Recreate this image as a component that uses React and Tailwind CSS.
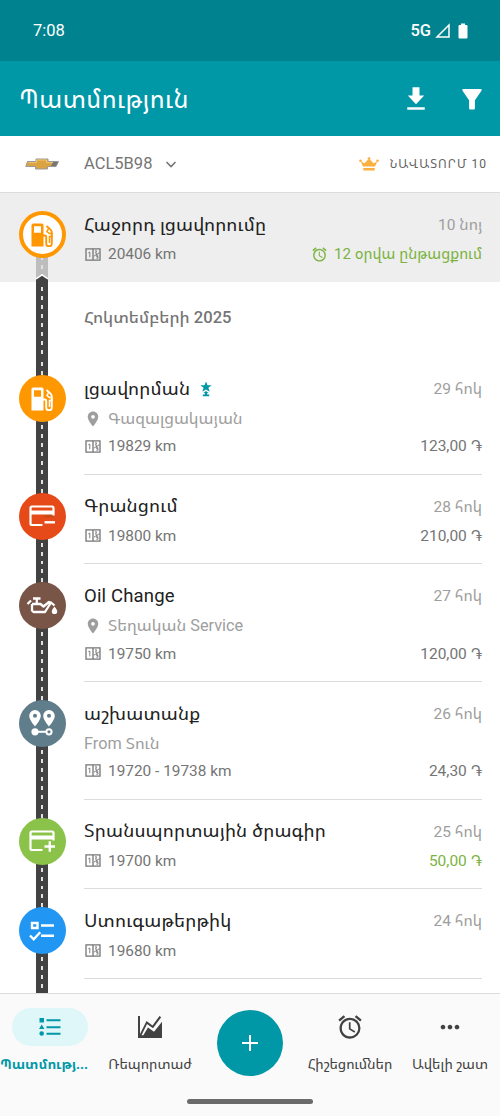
import React from 'react';
import { MdPlace, MdAlarm, MdMoreHoriz } from 'react-icons/md';

const FuelIcon = ({ className }) => (
  <svg viewBox="0 0 24 24" className={className} fill="none" stroke="currentColor">
    <path fillRule="evenodd" fill="currentColor" stroke="none" d="M3 .5h9A1.500 1.500 0 0 1 13.500 2v21.500h-12V2A1.500 1.500 0 0 1 3 .5zM4 3.300v6.500h7V3.300z" />
    <path d="M13 12.500h1.700a1.500 1.500 0 0 1 1.500 1.500v6.500a2.700 2.700 0 0 0 5.600 0V9.500c0-1.300-.4-2-1.300-2.900L16.500 3" strokeWidth="1.900" />
    <path d="M18.500 5.500L17 8.500l2.500 2h2.200v3h-2.200V20" strokeWidth="1.500" />
  </svg>
);

const CardIcon = ({ sign, className }) => (
  <svg viewBox="0 0 28 24" className={className} fill="none" stroke="currentColor" strokeWidth="2.200">
    <path d="M14.500 21H4a1.500 1.500 0 0 1-1.500-1.500V4A1.500 1.500 0 0 1 4 2.500h20A1.500 1.500 0 0 1 25.500 4v7.500" strokeWidth="2.200" />
    <path d="M2.500 8.500h23" strokeWidth="4" />
    {sign === 'plus' ? (
      <path d="M16.500 17.500h10.500M21.800 12.300v10.500" strokeWidth="2.400" />
    ) : (
      <>
        <path d="M15.500 13.200c2-3 9-3 10.500 0z" fill="#bf4a1a" stroke="none" />
        <path d="M16.500 18.300H27" strokeWidth="2.400" />
      </>
    )}
  </svg>
);

const OilIcon = ({ className }) => (
  <svg viewBox="0 0 32 24" className={className} fill="none" stroke="currentColor" strokeWidth="2.300" strokeLinejoin="round">
    <path d="M1.500 10l3.500-3.500M7 4.500h7.500M10.800 5v5M6 10h8.500l3 2.500L23 8l3 1M6 10v6.500L7.500 18H19l6-9.500 3.500 3" />
    <path fill="currentColor" stroke="none" d="M28.500 12.500c1.600 2.200 2.700 3.400 2.700 4.900a2.700 2.700 0 0 1-5.400 0c0-1.500 1.100-2.700 2.700-4.900z" />
  </svg>
);

const RouteIcon = ({ className }) => (
  <svg viewBox="0 0 28 28" className={className} fill="currentColor">
    <path fillRule="evenodd" d="M7 1a5.800 5.800 0 0 0-5.800 5.800C1.200 11 7 17.500 7 17.500S12.800 11 12.800 6.800A5.800 5.800 0 0 0 7 1zm0 3.800a2 2 0 1 1 0 4 2 2 0 0 1 0-4z" />
    <path fillRule="evenodd" d="M21 1a5.800 5.800 0 0 0-5.800 5.800C15.200 11 21 17.500 21 17.500S26.800 11 26.800 6.800A5.800 5.800 0 0 0 21 1zm0 3.800a2 2 0 1 1 0 4 2 2 0 0 1 0-4z" />
    <circle cx="7" cy="22.800" r="3.600" />
    <path d="M10 22.800h8" stroke="currentColor" strokeWidth="2" />
    <circle cx="21" cy="22.800" r="2.600" fill="none" stroke="currentColor" strokeWidth="2" />
  </svg>
);

const ChecklistIcon = ({ className }) => (
  <svg viewBox="0 0 28 24" className={className} fill="none" stroke="currentColor" strokeWidth="2.400">
    <path d="M4 4h5.500v5H4zM13 6.500h13M13 16.700h13M2 16.500l3.700 3.800 6.500-7" />
  </svg>
);

const OdometerIcon = ({ className }) => (
  <svg viewBox="0 0 16 13" className={className} fill="none" stroke="currentColor" strokeWidth="1.300">
    <path d="M1 .9h14v11.200H1zM8 .9v11.200" />
    <path d="M3.300 4.800l1.500-.8v5.300M10 2.800h1.600l-1.100 2.400h1.500M14.600 4.600L8.800 8.200M13.200 7.200h-1.600v1.300h1.400v1.700h-1.700" strokeWidth=".9" />
  </svg>
);

const StarPinIcon = () => (
  <svg viewBox="0 0 12 16" className="-mt-0.5 ml-2.5 h-4 w-3 text-[#0097a7]" fill="currentColor">
    <path d="M6 .6l1.500 3.700h4.200L8.400 6.800l1.200 3.900L6 8.500l-3.600 2.200 1.200-3.900L.3 4.300h4.200z" />
    <path d="M6 10l2.600 2H7.200v1.500h2V15.200H2.800v-1.700h2V12H3.400z" />
  </svg>
);

const entries = [
  { title: 'լցավորման', star: true, place: 'Գազալցակայան', km: '19829 km', date: '29 հոկ', price: '123,00 ֏', color: 'bg-[#ff9800]', icon: <FuelIcon className="size-6" /> },
  { title: 'Գրանցում', km: '19800 km', date: '28 հոկ', price: '210,00 ֏', color: 'bg-[#e64a19]', icon: <CardIcon className="h-6 w-7" /> },
  { title: 'Oil Change', place: 'Տեղական Service', km: '19750 km', date: '27 հոկ', price: '120,00 ֏', color: 'bg-[#795548]', icon: <OilIcon className="h-6 w-8" /> },
  { title: 'աշխատանք', note: 'From Տուն', km: '19720 - 19738 km', date: '26 հոկ', price: '24,30 ֏', color: 'bg-[#607d8b]', icon: <RouteIcon className="size-7" /> },
  { title: 'Տրանսպորտային ծրագիր', km: '19700 km', date: '25 հոկ', price: '50,00 ֏', green: true, color: 'bg-[#8bc34a]', icon: <CardIcon sign="plus" className="h-6 w-7" /> },
  { title: 'Ստուգաթերթիկ', km: '19680 km', date: '24 հոկ', color: 'bg-[#2196f3]', icon: <ChecklistIcon className="h-6 w-7" /> },
];

const Road = ({ color = 'bg-[#424242]' }) => (
  <div className={`col-start-1 row-start-1 flex w-3 justify-center ${color}`}>
    <div className="w-[1.5px] bg-[repeating-linear-gradient(to_bottom,transparent_0_5px,#e0e0e0_5px_9px)]"></div>
  </div>
);

const Entry = ({ item }) => (
  <li className={`flex ${item.place || item.note ? 'h-[117.8px]' : 'h-[89.4px]'}`}>
    <div className="grid w-[84px] shrink-0 justify-items-center">
      <Road />
      <div className={`col-start-1 row-start-1 mt-[18px] flex size-[47px] items-center justify-center rounded-full text-white ${item.color}`}>
        {item.icon}
      </div>
    </div>
    <div className="mr-[18px] flex flex-1 flex-col border-b border-[#dcdcdc] pt-[20.5px] text-[#757575]">
      <div className="flex h-6 items-center justify-between">
        <h2 className="flex items-center text-[18.5px] tracking-[0.17px] text-[#212121]">
          {item.title}
          {item.star && <StarPinIcon />}
        </h2>
        <span className="text-[15.5px] text-[#9e9e9e]">{item.date}</span>
      </div>
      {item.place && (
        <div className="mt-[5px] flex h-6 items-center text-[16.3px] text-[#9e9e9e]">
          <MdPlace className="mr-1.5 size-[18px]" />
          <span className="pt-px">{item.place}</span>
        </div>
      )}
      {item.note && <div className="mt-[5px] flex h-6 items-center pt-px text-[16.3px] text-[#9e9e9e]">{item.note}</div>}
      <div className={`flex h-6 items-center ${item.place || item.note ? 'mt-[3.5px]' : 'mt-[4.5px]'}`}>
        <OdometerIcon className="mr-1.5 ml-px h-[13px] w-4" />
        <span className="ml-px pt-0.5 text-[15.4px]">{item.km}</span>
        <span className={`ml-auto pt-0.5 text-[15.5px] ${item.green ? 'text-[#7cb342]' : ''}`}>{item.price}</span>
      </div>
    </div>
  </li>
);

const NavItem = ({ label, active, children }) => (
  <div className={`flex w-[100px] flex-col items-center ${active ? 'font-bold text-[#0097a7]' : 'text-[#424242]'}`}>
    <div className={`mt-3.5 flex h-[38px] w-[76px] items-center justify-center rounded-full ${active ? 'bg-[#e0f7fa]' : ''}`}>{children}</div>
    <span className={`mt-2 leading-5 whitespace-nowrap ${active ? 'mr-3 text-[13.8px]' : 'text-[14px]'}`}>{label}</span>
  </div>
);

const App = () => {
  return (
    <div className="flex h-[1116px] w-[500px] flex-col overflow-hidden bg-white font-['Roboto','Noto_Sans_Armenian','Noto_Sans','DejaVu_Sans',sans-serif] text-base">
      <div className="flex h-[61px] shrink-0 items-center bg-[#00838f] pr-8 pl-[33px] text-white">
        <span className="mt-px text-[16.5px]">7:08</span>
        <span className="mt-0.5 ml-auto text-[16.5px] font-medium">5G</span>
        <svg viewBox="0 0 16 16" className="ml-1 size-4" fill="none" stroke="currentColor" strokeWidth="1.500">
          <path d="M14 2v12H2z" />
        </svg>
        <svg viewBox="0 0 10 16" className="ml-[7px] h-4 w-2.5" fill="currentColor">
          <path d="M3 .5h4V2h1.500a1 1 0 0 1 1 1v11.500a1 1 0 0 1-1 1h-7a1 1 0 0 1-1-1V3a1 1 0 0 1 1-1H3z" />
        </svg>
      </div>

      <header className="flex h-[75px] shrink-0 items-center bg-[#0097a7] pr-[14px] pl-[19px] text-white">
        <h1 className="mt-0.5 text-[25px] tracking-[0.4px]">Պատմություն</h1>
        <svg viewBox="0 0 24 24" className="ml-auto size-7" fill="currentColor">
          <path d="M19 9h-4V2H9v7H5l7 7.500L19 9zM4.500 19v2.300h15V19z" />
        </svg>
        <svg viewBox="0 0 24 24" className="ml-7 size-7" fill="currentColor">
          <path d="M4.500 3.500h15c.8 0 1.100.8.6 1.400L14.500 13v7a1 1 0 0 1-1 1h-3a1 1 0 0 1-1-1v-7L3.900 4.900c-.5-.6-.2-1.400.6-1.400z" />
        </svg>
      </header>

      <div className="flex h-[57px] shrink-0 items-center border-b border-[#dcdcdc] pr-[13px] pl-[25px] text-[#757575]">
        <svg viewBox="0 0 34 12" className="h-3 w-[34px]">
          <path d="M2.500 3.500H11V1h12v2.500h10.500L31 8.500h-8.500V11h-12V8.500H.8z" fill="#dca342" stroke="#999" strokeWidth="1" />
          <path d="M28 4h5l-2 4h-5z" fill="#777" />
          <path d="M3.500 4.500h8V2h10v2.500H28" fill="none" stroke="#f3cf80" strokeWidth=".8" />
        </svg>
        <span className="ml-[25px] pt-px text-[16.5px]">ACL5B98</span>
        <svg viewBox="0 0 12 12" className="ml-[13px] size-3" fill="none" stroke="currentColor" strokeWidth="1.600">
          <path d="M1.500 4L6 8.500 10.500 4" />
        </svg>
        <svg viewBox="0 0 20 14" className="ml-auto h-[14px] w-5 text-[#fbb040]" fill="currentColor">
          <path d="M4 9.500L1.700 4.500l3.800 1.800L9 2.500h2l3.500 3.800 3.800-1.800L16 9.500zM4.300 11h11.400v2.500H4.300z" />
          <circle cx="1.500" cy="3.800" r="1.300" />
          <circle cx="10" cy="1.600" r="1.400" />
          <circle cx="18.500" cy="3.800" r="1.300" />
        </svg>
        <span className="ml-[11px] text-xs tracking-[1px] text-[#616161]">ՆԱՎԱՏՈՐՄ 10</span>
      </div>

      <div className="flex h-[89px] shrink-0 bg-[#eeeeee]">
        <div className="grid w-[84px] shrink-0 justify-items-center">
          <div className="col-start-1 row-start-1 mt-10 grid">
            <Road color="bg-[#bdbdbd]" />
          </div>
          <svg viewBox="0 0 12 8" className="col-start-1 row-start-1 h-2 w-3 self-end">
            <path d="M0 8V5l6-4 6 4v3z" fill="#424242" />
            <path d="M0 5l6-4 6 4" fill="none" stroke="#fff" strokeWidth="1.500" />
          </svg>
          <div className="col-start-1 row-start-1 mt-[18px] flex size-[47px] items-center justify-center rounded-full border-4 border-[#ff9800] bg-white text-[#ff9800]">
            <FuelIcon className="size-6" />
          </div>
        </div>
        <div className="mr-[18px] flex flex-1 flex-col pt-[20.5px] text-[#757575]">
          <div className="flex h-6 items-center justify-between">
            <h2 className="text-[18.5px] tracking-[0.17px] text-[#212121]">Հաջորդ լցավորումը</h2>
            <span className="text-[15.5px] text-[#9e9e9e]">10 նոյ</span>
          </div>
          <div className="mt-[4.5px] flex h-6 items-center">
            <OdometerIcon className="mr-1.5 ml-px h-[13px] w-4" />
            <span className="ml-px pt-0.5 text-[15.4px]">20406 km</span>
            <MdAlarm className="mr-1.5 ml-auto size-[17px] text-[#7cb342]" />
            <span className="pt-px text-[15.100px] text-[#7cb342]">12 օրվա ընթացքում</span>
          </div>
        </div>
      </div>

      <main className="min-h-0 flex-1 overflow-hidden">
        <div className="flex h-[75px]">
          <div className="grid w-[84px] shrink-0 justify-items-center">
            <Road />
          </div>
          <h3 className="mt-6 text-[16.6px] font-medium text-[#757575]">Հոկտեմբերի 2025</h3>
        </div>
        <ul>
          {entries.map((item) => (
            <Entry key={item.km} item={item} />
          ))}
          <li className="grid h-10 w-[84px] justify-items-center">
            <Road />
          </li>
        </ul>
      </main>

      <nav className="flex h-[123px] shrink-0 flex-col border-t border-[#dcdcdc] bg-[#fafafa]">
        <div className="flex">
          <NavItem label="Պատմությ..." active>
            <svg viewBox="0 0 24 20" className="h-5 w-6" fill="currentColor">
              <path d="M1.500 1H6v4.500H1.500zM3.700 7.500L6.500 12H1z" />
              <circle cx="3.700" cy="16.500" r="2.300" />
              <path d="M8.500 2.300h14v2h-14zM8.500 9.200h14v2h-14zM8.500 15.700h14v2h-14z" />
            </svg>
          </NavItem>
          <NavItem label="Ռեպորտաժ">
            <svg viewBox="0 0 24 22" className="h-[22px] w-6" fill="currentColor">
              <path d="M0 0h2v18L8.500 5l6 4.500L21.500 0l1.700 1.200-8.200 11-6-4.300L3.500 19.200h1.800L10 11.500l6 4.300L24 5.800V22H0z" />
            </svg>
          </NavItem>
          <div className="flex w-[100px] justify-center">
            <button className="mt-4 flex size-[66px] items-center justify-center rounded-full bg-[#0097a7] text-white">
              <svg viewBox="0 0 18 18" className="size-[18px]" stroke="currentColor" strokeWidth="2">
                <path d="M9 1v16M1 9h16" />
              </svg>
            </button>
          </div>
          <NavItem label="Հիշեցումներ">
            <MdAlarm className="size-7" />
          </NavItem>
          <NavItem label="Ավելի շատ">
            <MdMoreHoriz className="size-7" />
          </NavItem>
        </div>
        <div className="mx-auto mt-auto mb-3 h-[5px] w-[126px] rounded-full bg-[#6b6b6b]"></div>
      </nav>
    </div>
  );
};

export default App;
